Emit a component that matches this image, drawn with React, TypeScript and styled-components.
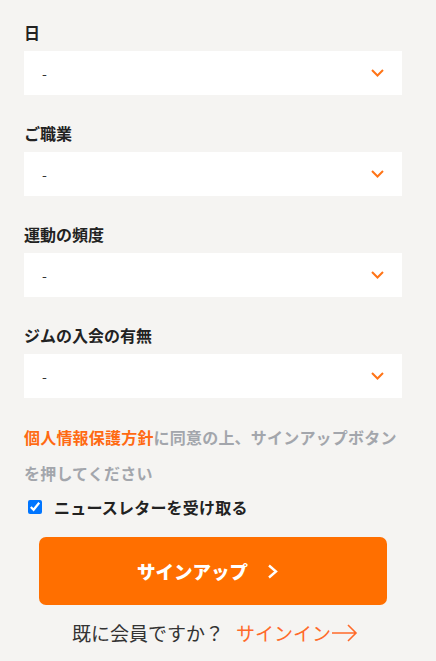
import React, { useState } from 'react';
import styled, { createGlobalStyle } from 'styled-components';

const GlobalStyle = createGlobalStyle`
  html, body {
    margin: 0;
    padding: 0;
    background: #f5f4f2;
  }
  body {
    font-family: "Noto Sans CJK JP", "Noto Sans", sans-serif;
    color: #222222;
  }
`;

const ORANGE = '#ff6f00';

const Page = styled.div`
  width: 436px;
  min-height: 661px;
  box-sizing: border-box;
  padding: 21px 34px 0 24px;
  background: #f5f4f2;
`;

const Fields = styled.div`
  display: flex;
  flex-direction: column;
  gap: 27px;
`;

const Field = styled.div`
  display: flex;
  flex-direction: column;
`;

const Label = styled.label`
  font-size: 16px;
  font-weight: 700;
  line-height: 22px;
  margin-bottom: 8px;
  color: #222222;
`;

const SelectWrap = styled.div`
  position: relative;
  height: 44px;
`;

const Select = styled.select`
  appearance: none;
  -webkit-appearance: none;
  width: 100%;
  height: 100%;
  border: none;
  border-radius: 0;
  background: #ffffff;
  padding: 0 40px 0 18px;
  font-family: "Noto Sans CJK JP", "Noto Sans", sans-serif;
  font-size: 14px;
  color: #333333;
  outline: none;
`;

const Chevron = styled.svg`
  position: absolute;
  right: 18px;
  top: 18px;
  pointer-events: none;
`;

const Consent = styled.p`
  margin: 21px 0 0;
  font-size: 16px;
  font-weight: 700;
  line-height: 36px;
  letter-spacing: 0.2px;
  color: #a3a6ac;
`;

const PolicyLink = styled.a`
  color: #ff6a13;
  text-decoration: none;
`;

const CheckRow = styled.label`
  display: flex;
  align-items: center;
  margin-top: 4px;
  height: 24px;
  font-size: 16px;
  font-weight: 700;
  letter-spacing: 0.2px;
  color: #222222;
  gap: 12px;
`;

const Checkbox = styled.input`
  width: 14px;
  height: 14px;
  margin: 0 0 0 4px;
  accent-color: #0075ff;
`;

const SubmitButton = styled.button`
  display: flex;
  align-items: center;
  justify-content: center;
  gap: 19px;
  width: 348px;
  height: 68px;
  margin: 18px 0 0 15px;
  border: none;
  border-radius: 7px;
  background: ${ORANGE};
  color: #ffffff;
  font-family: "Noto Sans CJK JP", "Noto Sans", sans-serif;
  font-size: 18.5px;
  font-weight: 900;
  padding: 0 10px 0 0;
  cursor: pointer;
`;

const SignInLine = styled.p`
  margin: 14px 0 0;
  font-size: 19px;
  line-height: 28px;
  color: #333333;
  display: flex;
  align-items: center;
  justify-content: center;
  padding-left: 4px;
`;

const SignInLink = styled.a`
  color: #ff6a2a;
  text-decoration: none;
  display: inline-flex;
  align-items: center;
  gap: 1px;
  margin-left: 12px;
`;

const fields = ['日', 'ご職業', '運動の頻度', 'ジムの入会の有無'];

const ChevronDown = () => (
  <Chevron width="13" height="8" viewBox="0 0 13 8" fill="none">
    <path d="M1 1 L6.5 6.5 L12 1" stroke="#ff7417" strokeWidth="2" />
  </Chevron>
);

const App: React.FC = () => {
  const [newsletter, setNewsletter] = useState(true);

  return (
    <Page>
      <GlobalStyle />
      <Fields>
        {fields.map((name) => (
          <Field key={name}>
            <Label>{name}</Label>
            <SelectWrap>
              <Select defaultValue="-">
                <option value="-">-</option>
              </Select>
              <ChevronDown />
            </SelectWrap>
          </Field>
        ))}
      </Fields>

      <Consent>
        <PolicyLink href="#">個人情報保護方針</PolicyLink>
        に同意の上、サインアップボタンを押してください
      </Consent>

      <CheckRow>
        <Checkbox
          type="checkbox"
          checked={newsletter}
          onChange={(e) => setNewsletter(e.target.checked)}
        />
        ニュースレターを受け取る
      </CheckRow>

      <SubmitButton type="button">
        サインアップ
        <svg width="12" height="15" viewBox="0 0 12 15" fill="none">
          <path d="M2 1.5 L9 7.5 L2 13.5" stroke="#ffffff" strokeWidth="2.4" />
        </svg>
      </SubmitButton>

      <SignInLine>
        既に会員ですか？
        <SignInLink href="#">
          サインイン
          <svg width="26" height="18" viewBox="0 0 26 18" fill="none">
            <path d="M0 9 H24 M16 1 L24 9 L16 17" stroke="#ff6a2a" strokeWidth="1.6" />
          </svg>
        </SignInLink>
      </SignInLine>
    </Page>
  );
};

export default App;
